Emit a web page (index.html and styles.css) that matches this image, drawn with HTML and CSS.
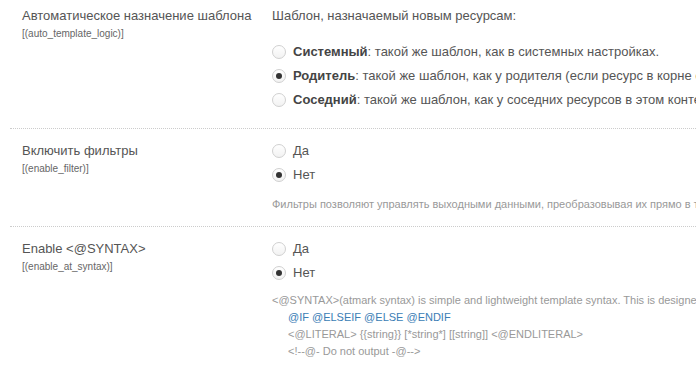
FILE: index.html
```html
<!DOCTYPE html>
<html lang="ru">
<head>
    <meta charset="UTF-8">
    <meta name="viewport" content="width=device-width, initial-scale=1.0">
    <title>Настройки</title>
    <link rel="stylesheet" href="styles.css">
</head>
<body>
    <div class="settings">
        <div class="setting setting-first">
            <div class="setting-label">
                <div class="setting-title">Автоматическое назначение шаблона</div>
                <div class="setting-key">[(auto_template_logic)]</div>
            </div>
            <div class="setting-field">
                <div class="field-caption">Шаблон, назначаемый новым ресурсам:</div>
                <div class="radio-group">
                    <label class="radio"><span class="radio-box"></span><span><b>Системный</b>: такой же шаблон, как в системных настройках.</span></label>
                    <label class="radio"><span class="radio-box checked"></span><span><b>Родитель</b>: такой же шаблон, как у родителя (если ресурс в корне сайта, то используется системный).</span></label>
                    <label class="radio"><span class="radio-box"></span><span><b>Соседний</b>: такой же шаблон, как у соседних ресурсов в этом контейнере.</span></label>
                </div>
            </div>
        </div>

        <div class="setting">
            <div class="setting-label">
                <div class="setting-title">Включить фильтры</div>
                <div class="setting-key">[(enable_filter)]</div>
            </div>
            <div class="setting-field">
                <label class="radio"><span class="radio-box"></span><span>Да</span></label>
                <label class="radio"><span class="radio-box checked"></span><span>Нет</span></label>
                <div class="setting-desc">Фильтры позволяют управлять выходными данными, преобразовывая их прямо в тегах шаблона.</div>
            </div>
        </div>

        <div class="setting">
            <div class="setting-label">
                <div class="setting-title">Enable &lt;@SYNTAX&gt;</div>
                <div class="setting-key">[(enable_at_syntax)]</div>
            </div>
            <div class="setting-field">
                <label class="radio"><span class="radio-box"></span><span>Да</span></label>
                <label class="radio"><span class="radio-box checked"></span><span>Нет</span></label>
                <div class="setting-desc setting-desc-code">
                    <div>&lt;@SYNTAX&gt;(atmark syntax) is simple and lightweight template syntax. This is designed for ease of use.</div>
                    <div class="code-line code-blue">@IF @ELSEIF @ELSE @ENDIF</div>
                    <div class="code-line">&lt;@LITERAL&gt; {{string}} [*string*] [[string]] &lt;@ENDLITERAL&gt;</div>
                    <div class="code-line">&lt;!--@- Do not output -@--&gt;</div>
                </div>
            </div>
        </div>
    </div>
</body>
</html>
```

FILE: styles.css
```css
body {
    margin: 0;
    background-color: #ffffff;
    font-family: "Liberation Sans", Arial, sans-serif;
    color: #555555;
    overflow: hidden;
}

.settings {
    padding-left: 10px;
    width: 1000px;
}

.setting {
    display: grid;
    grid-template-columns: 262px 1fr;
    padding: 10px 0 14px 0;
    border-bottom: 1px dotted #cccccc;
}

.setting-first {
    padding-top: 4px;
    padding-bottom: 16px;
}

.setting-label {
    padding-left: 12px;
}

.setting-title {
    font-size: 13px;
    line-height: 24px;
    color: #555555;
    white-space: nowrap;
}

.setting-key {
    font-size: 10px;
    line-height: 12px;
    color: #666666;
}

.setting-field {
    white-space: nowrap;
}

.field-caption {
    font-size: 13px;
    line-height: 24px;
}

.radio-group {
    margin-top: 12px;
}

.radio {
    display: flex;
    align-items: center;
    gap: 7px;
    font-size: 13px;
    line-height: 24px;
    color: #555555;
}

.radio b {
    color: #444444;
}

/* радио-кнопка нарисована вручную */
.radio-box {
    width: 12px;
    height: 12px;
    border: 1px solid #d0d0d0;
    border-radius: 50%;
    background: linear-gradient(#ffffff, #f2f2f2);
    display: flex;
    justify-content: center;
    align-items: center;
    flex-shrink: 0;
}

.radio-box.checked::after {
    content: "";
    width: 6px;
    height: 6px;
    border-radius: 50%;
    background-color: #333333;
}

.setting-desc {
    margin-top: 9px;
    font-size: 11px;
    line-height: 16px;
    color: #999999;
}

.setting-desc-code {
    margin-top: 7px;
    line-height: 17px;
}

.code-line {
    padding-left: 16px;
}

.code-blue {
    color: #3a7db5;
}
```
